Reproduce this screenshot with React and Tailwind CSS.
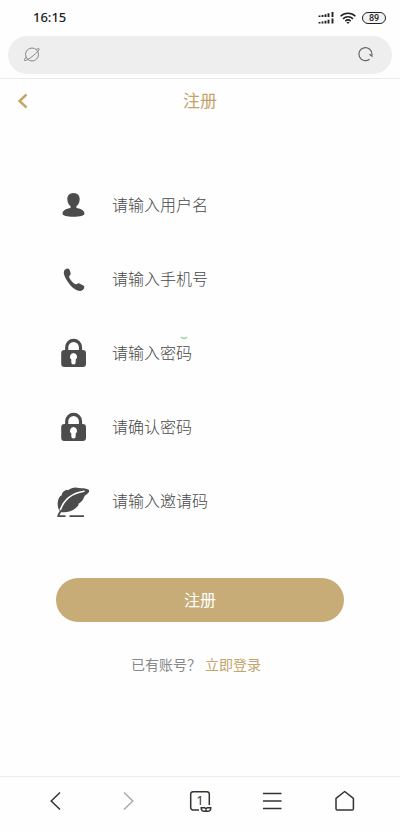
import { useState } from "react";

function UserIcon() {
  return (
    <svg viewBox="0 0 36 36" className="h-9 w-9" fill="currentColor" aria-hidden="true">
      <path d="M17.500 6c4 0 6.300 2.800 6.200 6.300-.1 3.400-1.500 5.600-3.300 7v1.500c3 1 8.100 1.900 8.100 5.900 0 1.800-4.500 3.100-11 3.100s-11-1.300-11-3.100c0-4 5.100-4.900 8.100-5.900v-1.500c-1.800-1.400-3.200-3.600-3.300-7C11.200 8.800 13.500 6 17.500 6Z" />
    </svg>
  );
}

function PhoneIcon() {
  return (
    <svg viewBox="0 0 36 36" className="h-9 w-9" fill="currentColor" aria-hidden="true">
      <path d="M9.500 8.200c1.900-1.200 3.600-.8 4.200.9l1 3.400c.2 1.400-1.700 2-1.500 3.500.3 2.200 4.200 6.600 6.500 7.200 1.500.4 2-1.300 3.300-.9l4.300 2.100c1.900 1.100.8 3.400-.6 4.600-1.600 1.400-4.500 1.400-7.600-.7-4.200-2.700-8-7.900-10.300-12.900-1.300-2.900-1.500-5.700.7-7.200Z" />
    </svg>
  );
}

function LockIcon() {
  return (
    <svg viewBox="0 0 36 36" className="h-9 w-9" aria-hidden="true">
      <path d="M10.700 17v-4.700a6.900 6.900 0 0 1 13.800 0V17" fill="none" stroke="currentColor" strokeWidth="3.200" />
      <rect x="5.200" y="15" width="24.800" height="17" rx="3.200" fill="currentColor" />
      <path d="M17.500 18a3.600 3.600 0 0 1 2.200 6.400v2.900a2.200 2.200 0 0 1-4.400 0v-2.900a3.600 3.600 0 0 1 2.200-6.400Z" fill="#fff" />
    </svg>
  );
}

function QuillIcon() {
  return (
    <svg viewBox="0 0 36 36" className="h-9 w-9" aria-hidden="true">
      <path
        d="M3.800 28.500C.7 23.500.9 17 4.500 12.700c.5.300 1 .1 1.200-.7.400-2.500 2.100-4.100 4.900-5.200.9.700 1.700.6 2.500-.2 2.900-2.100 6.400-2.700 9.900-1.600 3.200.4 6.200-.1 9.300 1.600 1.100.7 1.100 1.900.3 2.900-1.500 1.800-3.800 2.500-4.600 4.800-.9 2.500-2.200 4.400-4.300 5.700-.7.500-1.200.5-1.200 1.300 0 1-.5 1.500-1.200 2.100-4.500 5.200-10.500 6.500-16.500 5.700Z"
        fill="currentColor"
      />
      <path d="M4.300 27C7.500 17.500 15.500 10.200 28 8.200" fill="none" stroke="#fff" strokeWidth="1.600" strokeLinecap="round" />
      <path d="M5.300 27.500C3.800 29.500 2.500 31 2.200 33.200h7.300M13.500 33.200H28" fill="none" stroke="currentColor" strokeWidth="1.700" />
    </svg>
  );
}

const fields = [
  { name: "username", type: "text", label: "请输入用户名", Icon: UserIcon },
  { name: "phone", type: "tel", label: "请输入手机号", Icon: PhoneIcon },
  { name: "password", type: "password", label: "请输入密码", Icon: LockIcon, mark: true },
  { name: "confirm", type: "password", label: "请确认密码", Icon: LockIcon },
  { name: "invite", type: "text", label: "请输入邀请码", Icon: QuillIcon },
];

function StatusBar() {
  return (
    <div className="flex h-9 items-center justify-between pr-3.5 pl-8 text-[#222]">
      <span className="pl-px font-['Noto_Sans',sans-serif] text-[13px] font-medium">16:15</span>
      <div className="flex items-center gap-1.5">
        <svg viewBox="0 0 16 12" className="h-3 w-4" stroke="currentColor" strokeWidth="1.900" aria-hidden="true">
          <path d="M1.500 5V3.500M4.500 5V3M7.500 5V2.300M10.500 5V1.200M14.500 5V0M1.500 11.500V10M4.500 11.500v-2M7.500 11.500V8.800M10.500 11.500V7.700M14.500 11.500V6.500" />
        </svg>
        <svg viewBox="0 0 16 12" className="h-3 w-4" fill="none" stroke="currentColor" strokeWidth="1.600" aria-hidden="true">
          <path d="M.6 4.300a10.600 10.600 0 0 1 14.800 0M3 6.800a7.200 7.200 0 0 1 10 0M5.300 9.100a4 4 0 0 1 5.400 0" />
          <path d="M6.400 10.100h3.200L8 12Z" fill="currentColor" stroke="none" />
        </svg>
        <span className="flex h-3 w-6 items-center justify-center rounded-full border border-[#222] bg-[#f3f3f3] font-['Roboto',sans-serif] text-[9px] leading-none font-medium">
          89
        </span>
      </div>
    </div>
  );
}

function AddressBar() {
  return (
    <div className="border-b border-[#ebebeb] px-2 pb-1">
      <div className="flex h-[38px] items-center justify-between rounded-full bg-[#eee] pr-4 pl-3.5">
        <svg viewBox="0 0 20 20" className="h-5 w-5 text-[#888]" fill="none" stroke="currentColor" aria-hidden="true">
          <circle cx="10" cy="9.500" r="6.500" />
          <path d="M4.600 11.900c-2.200 2-2.700 3.400-1.700 3.700 2.600.3 14.600-9.400 14.300-11.600-.2-.8-1.300-.6-2.900.4" />
        </svg>
        <button type="button" aria-label="刷新" className="text-[#666]">
          <svg viewBox="0 0 20 20" className="h-5 w-5" fill="none" stroke="currentColor" strokeWidth="1.200">
            <path d="M13.500 14.200a6.500 6.500 0 1 1 2.400-5" />
            <path d="M12.700 9.200h3.800v3.400Z" fill="currentColor" stroke="none" />
          </svg>
        </button>
      </div>
    </div>
  );
}

function BrowserNav() {
  return (
    <nav className="flex h-14 items-center justify-around border-t border-[#ededed] px-5 pb-2 text-[#333]">
      <button type="button" aria-label="后退">
        <svg viewBox="0 0 24 24" className="h-6 w-6" fill="none" stroke="currentColor" strokeWidth="1.500">
          <path d="M16 3.500 7.200 12l8.800 8.500" />
        </svg>
      </button>
      <button type="button" aria-label="前进" className="text-[#aaa]">
        <svg viewBox="0 0 24 24" className="h-6 w-6" fill="none" stroke="currentColor" strokeWidth="1.500">
          <path d="m8 3.500 8.800 8.500L8 20.500" />
        </svg>
      </button>
      <button type="button" aria-label="窗口" className="relative flex h-6 w-6 items-center justify-center">
        <svg viewBox="0 0 24 24" className="absolute inset-0 h-6 w-6" fill="none" stroke="currentColor" strokeWidth="1.500">
          <path d="M11 21H5a2.300 2.300 0 0 1-2.300-2.300V5A2.300 2.300 0 0 1 5 2.700h14A2.300 2.300 0 0 1 21.300 5v11" />
          <path d="M13.200 18.700h3.300l1.500 1 1.500-1h3.300c0 2.300-1.500 3.600-3.300 3.600h-3c-1.800 0-3.300-1.300-3.300-3.600ZM18 19.700v2.600" />
        </svg>
        <span className="font-['Noto_Sans',sans-serif] text-[13px]">1</span>
      </button>
      <button type="button" aria-label="菜单">
        <svg viewBox="0 0 24 24" className="h-6 w-6" fill="none" stroke="currentColor" strokeWidth="1.500">
          <path d="M3 4.500h18.500M3 12h18.500M3 19.500h18.500" />
        </svg>
      </button>
      <button type="button" aria-label="主页">
        <svg viewBox="0 0 24 24" className="h-6 w-6" fill="none" stroke="currentColor" strokeWidth="1.500" strokeLinejoin="round">
          <path d="M4 9.300 12.700 2.500l8.700 6.800v10.400a1.300 1.300 0 0 1-1.300 1.300H5.300A1.300 1.300 0 0 1 4 19.700Z" />
        </svg>
      </button>
    </nav>
  );
}

export default function App() {
  const [values, setValues] = useState({});

  const handleChange = (e) => {
    setValues({ ...values, [e.target.name]: e.target.value });
  };

  return (
    <div className="flex min-h-screen flex-col bg-[#fefefe] font-['Noto_Sans_CJK_SC',sans-serif]">
      <StatusBar />
      <AddressBar />

      {/* Page title */}
      <header className="grid h-11 grid-cols-3 items-center px-4 text-[#c4a46a]">
        <a href="#back" aria-label="返回" className="justify-self-start">
          <svg viewBox="0 0 16 16" className="h-4 w-4" fill="none" stroke="currentColor" strokeWidth="2.400">
            <path d="M10.500 1.500 3.500 8l7 6.500" />
          </svg>
        </a>
        <h1 className="pb-0.5 text-center text-[17px] leading-6 font-normal">注册</h1>
      </header>

      <main className="flex-1 px-14 pt-[45px]">
        <form onSubmit={(e) => e.preventDefault()}>
          {fields.map(({ name, type, label, Icon, mark }) => (
            <div key={name} className="relative flex h-[74px] items-center gap-5 text-[#4c4c4c]">
              <label htmlFor={name} className="shrink-0" aria-label={label}>
                <Icon />
              </label>
              <input
                id={name}
                name={name}
                type={type}
                placeholder={label}
                value={values[name] || ""}
                onChange={handleChange}
                className="h-10 w-full min-w-0 pb-0.5 text-[16px] font-light outline-none placeholder:text-[#484848]"
              />
              {mark && (
                <svg viewBox="0 0 8 4" className="absolute top-5 left-31 h-1 w-2" fill="none" stroke="#8fd69a" strokeWidth="1.300" aria-hidden="true">
                  <path d="M1 1c1.500 2 4.500 2 6 0" />
                </svg>
              )}
            </div>
          ))}
          <button type="submit" className="mt-10 h-11 w-full rounded-full bg-[#c8ac78] pb-0.5 text-[16px] text-white">
            注册
          </button>
        </form>
        <p className="mt-8 flex justify-center gap-1 pr-2 text-sm text-[#888]">
          <span>已有账号？</span>
          <a href="#login" className="text-[#c4a46a]">
            立即登录
          </a>
        </p>
      </main>

      <BrowserNav />
    </div>
  );
}
